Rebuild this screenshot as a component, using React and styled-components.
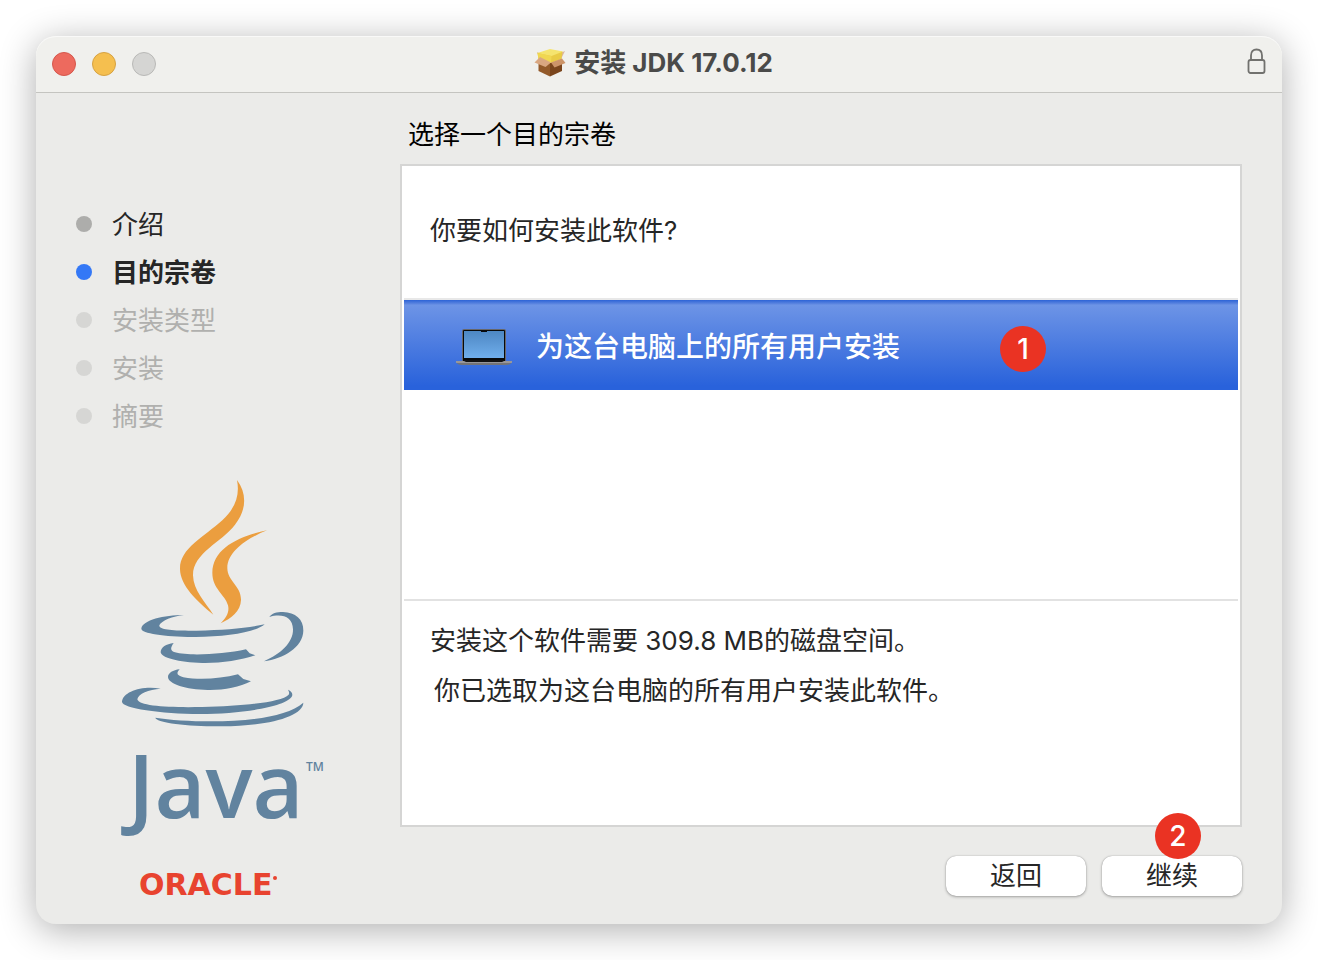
import React, { useState } from "react";
import styled, { createGlobalStyle } from "styled-components";

const GlobalStyle = createGlobalStyle`
  * {
    box-sizing: border-box;
  }

  body {
    margin: 0;
    background: #ffffff;
    color: #262626;
    font-family: Inter, "Noto Sans CJK SC", sans-serif;
    font-size: 26px;
    line-height: 32px;
  }

  button {
    font: inherit;
    color: inherit;
    padding: 0;
    border: 0;
  }
`;

const Page = styled.div`
  display: flex;
  min-height: 100vh;
  padding: 36px;
`;

const Window = styled.div`
  display: flex;
  flex-direction: column;
  flex: 1;
  border-radius: 20px;
  background: #ebebe9;
  box-shadow: 0 6px 36px rgba(0, 0, 0, 0.32);
`;

const TitleBar = styled.header`
  display: grid;
  grid-template-columns: 1fr auto 1fr;
  align-items: center;
  height: 57px;
  padding: 0 15px 0 16px;
  border-bottom: 1px solid #c4c4c0;
  border-radius: 20px 20px 0 0;
  background: #f0f0ed;
  box-shadow: inset 0 1px 0 #f9f9f8;
`;

const Lights = styled.div`
  display: flex;
  gap: 16px;
`;

const Light = styled.button`
  width: 24px;
  height: 24px;
  border: 1px solid ${(props) => props.$edge};
  border-radius: 50%;
  background: ${(props) => props.$color};
`;

const Title = styled.h1`
  display: flex;
  align-items: center;
  gap: 8px;
  margin: 0;
  padding: 0 12px 2px 0;
  color: #4a4a49;
  font-size: 26px;
  font-weight: 700;
`;

const LockSlot = styled.div`
  display: flex;
  justify-content: flex-end;
  padding-bottom: 4px;
`;

const Body = styled.div`
  display: flex;
  flex: 1;
`;

const Sidebar = styled.aside`
  display: flex;
  flex-direction: column;
  width: 364px;
  padding: 107px 40px 0;
`;

const Steps = styled.ol`
  margin: 0 0 30px;
  padding: 0;
  list-style: none;
`;

const Step = styled.li`
  display: flex;
  align-items: center;
  gap: 20px;
  height: 48px;
  color: ${(props) => (props.$state === "todo" ? "#b0b0ae" : "#262626")};
  font-weight: ${(props) => (props.$state === "current" ? 700 : 400)};

  &::before {
    content: "";
    width: 16px;
    height: 16px;
    border-radius: 50%;
    background: ${(props) =>
      ({ done: "#adadab", current: "#3478f6", todo: "#d6d6d4" })[props.$state]};
  }
`;

const StepName = styled.span`
  padding-top: 2px;
`;

const LogoSlot = styled.div`
  display: flex;
  padding-left: 24px;
`;

const Main = styled.main`
  display: flex;
  flex-direction: column;
  flex: 1;
  padding: 26px 40px 28px 0;
`;

const Heading = styled.h2`
  margin: 0 0 13px 8px;
  color: #000000;
  font-size: 26px;
  font-weight: 400;
`;

const Panel = styled.section`
  display: flex;
  flex-direction: column;
  flex: 1;
  padding: 0 2px;
  border: 2px solid #d5d5d4;
  background: #ffffff;
`;

const Question = styled.p`
  margin: 0;
  padding: 49px 26px 51px;
`;

const Choices = styled.div`
  flex: 1;
  border-top: 2px solid #e8e8e8;
  border-bottom: 2px solid #e2e2e2;
`;

const ChoiceRow = styled.div`
  position: relative;
`;

const Choice = styled.button`
  display: flex;
  align-items: center;
  gap: 24px;
  width: 100%;
  height: 90px;
  padding: 4px 52px 0;
  background: linear-gradient(#2c63d6, #5e87e0 4px, #6d94e6 5px, #2962db 86px);
  color: #ffffff;
  font-size: 28px;
  font-weight: 500;
`;

const Summary = styled.div`
  padding: 15px 26px 109px;
  line-height: 50px;

  p {
    margin: 0;
  }

  p + p {
    padding-left: 4px;
  }
`;

const Actions = styled.footer`
  display: flex;
  justify-content: flex-end;
  gap: 16px;
  margin-top: 29px;
`;

const ActionSlot = styled.div`
  position: relative;
`;

const ActionButton = styled.button`
  width: 140px;
  height: 40px;
  border-radius: 10px;
  background: #ffffff;
  box-shadow: 0 0 1px rgba(0, 0, 0, 0.35), 0 1px 3px rgba(0, 0, 0, 0.3);
`;

const Badge = styled.span`
  position: absolute;
  top: ${(props) => props.$top};
  right: ${(props) => props.$right};
  display: flex;
  align-items: center;
  justify-content: center;
  width: 46px;
  height: 46px;
  border-radius: 50%;
  background: #ea3323;
  color: #ffffff;
  font-size: 28px;
  font-weight: 500;
`;

const PackageIcon = () => (
  <svg width="32" height="30" viewBox="0 0 32 30" aria-hidden="true">
    <path d="M4.5 14 16 15v13.500L4.500 23z" fill="#935a2a" />
    <path d="M16 15 28 13v10l-12 5.500z" fill="#7a451c" />
    <path d="M3 4 6 11l3-4zM31 3l-4 8-3-5z" fill="#dcb59a" />
    <path d="m3.500 5 1 6L17 15l10.500-4 1-7.500z" fill="#e9cb45" />
    <path d="m3.500 5 12.500-4 13 2.500L17.500 8z" fill="#f5e46e" />
    <path d="m3.500 5 14 3-.5 7-12.500-4z" fill="#f0d751" />
    <path d="M6 9 17 14.500l-5.500 4.500L0.500 14.500z" fill="#d9a781" />
    <path d="m17 14.500 11-4 3.500 4.500-11 4.500z" fill="#cc9469" />
  </svg>
);

const LockIcon = () => (
  <svg
    width="20"
    height="28"
    viewBox="0 0 20 28"
    fill="none"
    stroke="#71716e"
    strokeWidth="1.8"
    aria-hidden="true"
  >
    <rect x="1.500" y="12" width="16" height="13" rx="2" />
    <path d="M4 12V7.500c0-4 2.300-6 5.500-6s5.500 2 5.500 6V12" />
  </svg>
);

const LaptopIcon = () => (
  <svg width="56" height="36" viewBox="0 0 56 36" aria-hidden="true">
    <defs>
      <linearGradient id="screen" x1="0" y1="0" x2="0" y2="1">
        <stop offset="0" stopColor="#4d87c3" />
        <stop offset="1" stopColor="#70aeec" />
      </linearGradient>
    </defs>
    <rect x="6" y="0" width="44" height="33" rx="2" fill="#66666a" />
    <rect x="7" y="1" width="42" height="32" rx="1" fill="#08090b" />
    <rect x="8" y="2" width="40" height="27" fill="url(#screen)" />
    <rect x="25" y="1" width="6" height="2" fill="#08090b" />
    <path d="M0 32h56v1c-1 2-3 3-6 3H6c-3 0-5-1-6-3z" fill="#747478" />
    <path d="M0 32h56v2H0z" fill="#97979b" />
    <path d="M8 31h40v1l-2 1H10l-2-1z" fill="#111113" />
  </svg>
);

const JavaLogo = () => (
  <svg width="240" height="436" viewBox="0 0 240 436" role="img" aria-label="Java, Oracle">
    <g transform="scale(0.33333)">
      <g fill="#eb9e3f">
        <path d="M411 30C442 72 439 121 405 164C365 217 278 249 279 316C280 361 315 396 340 434C290 392 241 348 240 297C239 235 312 201 367 151C406 114 420 76 411 30z" />
        <path d="M501 181C444 204 382 244 382 294C382 334 424 347 423 390C422 424 394 445 362 460C379 443 389 426 384 406C376 374 337 357 337 308C338 235 416 199 501 181z" />
      </g>
      <g fill="#61839f">
        <path d="M252 435C218 438 184 452 178 466C176 481 226 483 290 482C377 480 441 474 494 463C470 486 375 502 278 501C193 500 124 490 124 476C127 450 192 435 252 435z" />
        <path d="M508 441C515 430 530 426 549 426C586 427 611 448 610 482C609 532 550 566 492 574C542 552 580 518 579 478C578 440 546 430 508 441z" />
        <path d="M221 519C210 534 211 543 225 547C267 559 369 553 438 538L449 550L466 556C420 571 362 580 307 579C236 577 182 563 182 546C183 532 198 522 221 519z" />
        <path d="M239 598C227 610 232 617 250 622C300 631 362 626 414 613L430 627L453 634C418 652 370 661 323 660C258 659 204 641 204 621C204 609 219 600 239 598z" />
        <path d="M182 656C146 658 114 672 112 688C116 709 209 713 307 711C427 708 544 697 566 674C569 669 567 665 564 659C575 664 579 671 576 679C561 710 424 732 300 732C182 731 66 715 66 695C69 665 126 646 182 656z" />
        <path d="M166 743C286 761 537 764 610 698C609 740 503 768 365 769C273 770 169 759 166 743z" />
      </g>
    </g>
    <g fill="#61839f" fontFamily="'Open Sans', 'Noto Sans', sans-serif" fontWeight="600">
      <text x="28" y="348" fontSize="88">
        Java
      </text>
      <text x="206" y="301" fontSize="12">
        TM
      </text>
    </g>
    <text
      x="39"
      y="425"
      fill="#e8432f"
      fontFamily="'DejaVu Sans', sans-serif"
      fontWeight="700"
      fontSize="30"
    >
      ORACLE
    </text>
    <circle cx="175" cy="408" r="2" fill="#e8432f" />
  </svg>
);

const steps = [
  { name: "介绍", state: "done" },
  { name: "目的宗卷", state: "current" },
  { name: "安装类型", state: "todo" },
  { name: "安装", state: "todo" },
  { name: "摘要", state: "todo" },
];

const App = () => {
  const [selected, setSelected] = useState(true);

  return (
    <Page>
      <GlobalStyle />
      <Window>
        <TitleBar>
          <Lights>
            <Light $color="#ed6a5e" $edge="#d5574c" aria-label="关闭" />
            <Light $color="#f5bf4f" $edge="#d6a243" aria-label="最小化" />
            <Light $color="#d5d5d3" $edge="#b9b9b7" aria-label="缩放" disabled />
          </Lights>
          <Title>
            <PackageIcon />
            安装 JDK 17.0.12
          </Title>
          <LockSlot>
            <LockIcon />
          </LockSlot>
        </TitleBar>
        <Body>
          <Sidebar>
            <Steps>
              {steps.map((step) => (
                <Step key={step.name} $state={step.state}>
                  <StepName>{step.name}</StepName>
                </Step>
              ))}
            </Steps>
            <LogoSlot>
              <JavaLogo />
            </LogoSlot>
          </Sidebar>
          <Main>
            <Heading>选择一个目的宗卷</Heading>
            <Panel>
              <Question>你要如何安装此软件?</Question>
              <Choices>
                <ChoiceRow>
                  <Choice aria-pressed={selected} onClick={() => setSelected(true)}>
                    <LaptopIcon />
                    为这台电脑上的所有用户安装
                  </Choice>
                  <Badge $top="26px" $right="192px">
                    1
                  </Badge>
                </ChoiceRow>
              </Choices>
              <Summary>
                <p>安装这个软件需要 309.8 MB的磁盘空间。</p>
                <p>你已选取为这台电脑的所有用户安装此软件。</p>
              </Summary>
            </Panel>
            <Actions>
              <ActionSlot>
                <ActionButton>返回</ActionButton>
              </ActionSlot>
              <ActionSlot>
                <ActionButton>继续</ActionButton>
                <Badge $top="-43px" $right="41px">
                  2
                </Badge>
              </ActionSlot>
            </Actions>
          </Main>
        </Body>
      </Window>
    </Page>
  );
};

export default App;
